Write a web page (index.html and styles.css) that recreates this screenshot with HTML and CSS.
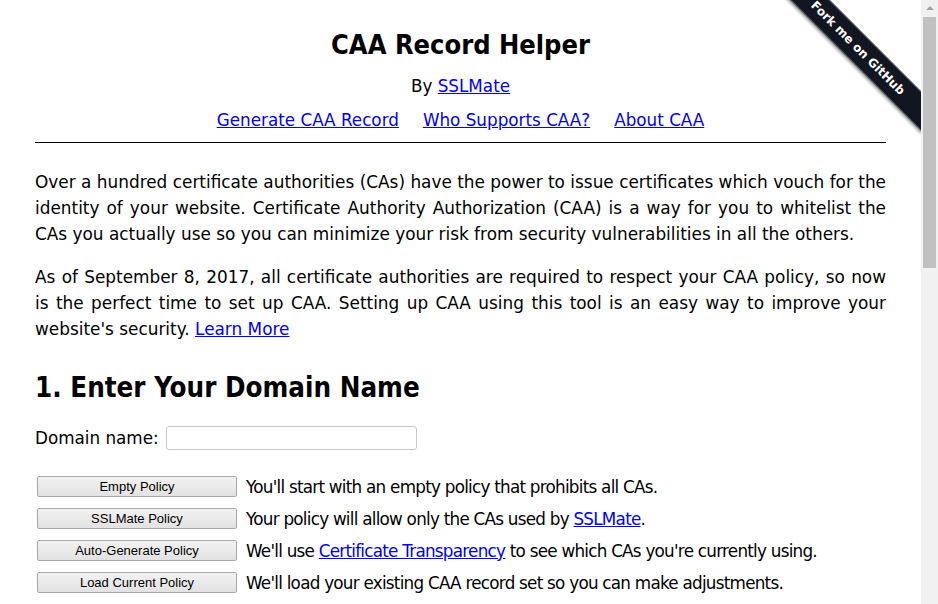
FILE: index.html
```html
<!DOCTYPE html>
<html lang="en">
<head>
    <meta charset="UTF-8">
    <meta name="viewport" content="width=device-width, initial-scale=1.0">
    <title>CAA Record Helper</title>
    <link rel="stylesheet" href="styles.css">
</head>
<body>

    <a class="fork-ribbon" href="#"><span>Fork me on GitHub</span></a>

    <div class="scrollbar" aria-hidden="true">
        <div class="scroll-arrow"></div>
        <div class="scroll-thumb"></div>
    </div>

    <div class="page">
        <header class="top">
            <h1>CAA Record Helper</h1>
            <p class="byline">By <a href="#">SSLMate</a></p>
            <nav class="nav">
                <a href="#">Generate CAA Record</a>
                <a href="#">Who Supports CAA?</a>
                <a href="#">About CAA</a>
            </nav>
        </header>

        <p class="intro first">Over a hundred certificate authorities (CAs) have the power to issue certificates which vouch for the identity of your website. Certificate Authority Authorization (CAA) is a way for you to whitelist the CAs you actually use so you can minimize your risk from security vulnerabilities in all the others.</p>

        <p class="intro">As of September 8, 2017, all certificate authorities are required to respect your CAA policy, so now is the perfect time to set up CAA. Setting up CAA using this tool is an easy way to improve your website's security. <a href="#">Learn More</a></p>

        <h2>1. Enter Your Domain Name</h2>

        <div class="domain-row">
            <label for="domain">Domain name:</label>
            <input type="text" id="domain" name="domain">
        </div>

        <div class="policies">
            <div class="policy">
                <button type="button">Empty Policy</button>
                <span>You'll start with an empty policy that prohibits all CAs.</span>
            </div>
            <div class="policy">
                <button type="button">SSLMate Policy</button>
                <span>Your policy will allow only the CAs used by <a href="#">SSLMate</a>.</span>
            </div>
            <div class="policy">
                <button type="button">Auto-Generate Policy</button>
                <span>We'll use <a href="#">Certificate Transparency</a> to see which CAs you're currently using.</span>
            </div>
            <div class="policy">
                <button type="button">Load Current Policy</button>
                <span>We'll load your existing CAA record set so you can make adjustments.</span>
            </div>
        </div>

        <h2 class="step-two">2. Select Authorized Certificate Authorities</h2>
        <p class="intro">Check the box next to each CA that is allowed to issue certificates for your domain.</p>
    </div>

</body>
</html>
```

FILE: styles.css
```css
* {
    box-sizing: border-box;
}

body {
    margin: 0;
    font-family: "DejaVu Sans", Verdana, sans-serif;
    font-size: 16.8px;
    color: #000;
    background-color: #fff;
}

a {
    color: #0000ee;
}

.page {
    padding: 0 52px 300px 35px;
}

/* cabecalho */
.top {
    text-align: center;
    border-bottom: 1px solid #000;
    padding-top: 28px;
    padding-bottom: 9px;
}

h1 {
    margin: 0;
    font-family: "DejaVu Sans Condensed", "DejaVu Sans", sans-serif;
    font-size: 27px;
    font-weight: bold;
    line-height: 34px;
}

.byline {
    margin: 11px 0 0 0;
    line-height: 26px;
}

.nav {
    display: flex;
    justify-content: center;
    gap: 24px;
    margin-top: 8px;
    line-height: 26px;
}

.intro {
    font-size: 16.9px;
    text-align: justify;
    line-height: 26px;
    margin: 17px 0 0 0;
}

.intro.first {
    margin-top: 26px;
}

h2 {
    font-family: "DejaVu Sans Condensed", "DejaVu Sans", sans-serif;
    font-size: 27.5px;
    line-height: 34px;
    margin: 28px 0 0 0;
}

.step-two {
    margin-top: 40px;
}

.domain-row {
    display: flex;
    align-items: center;
    gap: 7px;
    margin-top: 22px;
}

.domain-row input {
    width: 251px;
    height: 24px;
    border: 1px solid #c8c8c8;
    border-radius: 3px;
}

.policies {
    display: flex;
    flex-direction: column;
    gap: 11px;
    margin-top: 26px;
}

.policy {
    display: flex;
    align-items: center;
    gap: 9px;
    padding-left: 2px;
}

.policy span {
    letter-spacing: -0.75px;
}

.policy button {
    width: 200px;
    height: 21px;
    font-family: "Liberation Sans", Arial, sans-serif;
    font-size: 13px;
    color: #000;
    background: linear-gradient(#f2f2f2, #e2e2e2);
    border: 1px solid #a9a9a9;
    border-radius: 2px;
    padding: 0;
}

/* barra de rolagem desenhada */
.scrollbar {
    position: fixed;
    top: 0;
    right: 0;
    width: 17px;
    height: 100%;
    background-color: #f1f1f1;
    display: flex;
    flex-direction: column;
    align-items: center;
}

.scroll-arrow {
    width: 0;
    height: 0;
    margin-top: 6px;
    border-left: 4px solid transparent;
    border-right: 4px solid transparent;
    border-bottom: 4px solid #a3a3a3;
}

.scroll-thumb {
    width: 13px;
    height: 251px;
    margin-top: 7px;
    background-color: #c1c1c1;
}

/* fita do github */
.fork-ribbon {
    position: absolute;
    top: 0;
    right: 17px;
    width: 149px;
    height: 149px;
    overflow: hidden;
    text-decoration: none;
}

.fork-ribbon span {
    position: absolute;
    top: 34px;
    right: -42px;
    width: 210px;
    transform: rotate(45deg);
    background-color: #121621;
    color: #fff;
    font-family: "DejaVu Sans", sans-serif;
    font-size: 12px;
    font-weight: bold;
    text-align: center;
    line-height: 22px;
    padding: 2px 0;
    border-top: 1px solid #5a5f68;
    border-bottom: 1px solid #5a5f68;
    box-shadow: 0 2px 3px rgba(0, 0, 0, 0.4);
}
```
